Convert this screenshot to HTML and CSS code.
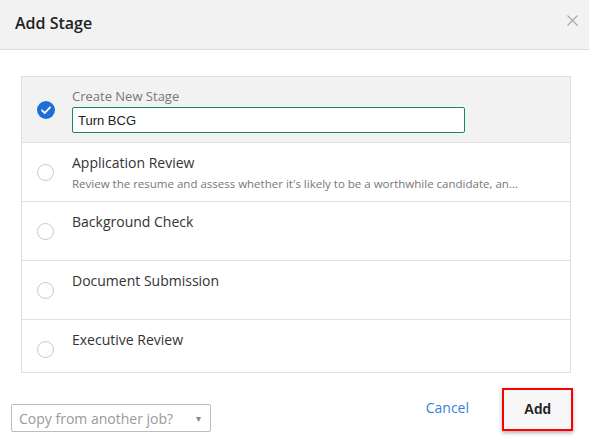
FILE: index.html
```html
<!DOCTYPE html>
<html lang="en">
  <head>
    <meta charset="UTF-8" />
    <meta name="viewport" content="width=device-width, initial-scale=1.0" />
    <title>Add Stage</title>
    <link rel="stylesheet" href="styles.css">
  </head>
  <body>
    <div class="modal">
      <div class="modal__header">
        <h1 class="modal__title">Add Stage</h1>
        <button class="modal__close" aria-label="Close">
          <svg width="11" height="11" viewBox="0 0 11 11">
            <path d="M0.5 0.5 L10.5 10.5 M10.5 0.5 L0.5 10.5" stroke="#a6a6a6" stroke-width="1.1" fill="none" />
          </svg>
        </button>
      </div>

      <div class="modal__body">
        <ul class="stage-list">
          <li class="stage stage--selected">
            <span class="stage__pick">
              <svg class="check" width="18" height="18" viewBox="0 0 18 18">
                <circle cx="9" cy="9" r="9" fill="#1f6fd6" />
                <path d="M5 9.3 L7.8 12 L13 6.4" stroke="#fff" stroke-width="1.8" fill="none" stroke-linecap="round" stroke-linejoin="round" />
              </svg>
            </span>
            <div class="stage__info">
              <label class="stage__label" for="stageName">Create New Stage</label>
              <input class="stage__input" id="stageName" type="text" value="Turn BCG" />
            </div>
          </li>
          <li class="stage">
            <span class="stage__pick"><span class="radio"></span></span>
            <div class="stage__info">
              <div class="stage__name">Application Review</div>
              <div class="stage__desc">Review the resume and assess whether it's likely to be a worthwhile candidate, and decide whether to move them forward.</div>
            </div>
          </li>
          <li class="stage">
            <span class="stage__pick"><span class="radio"></span></span>
            <div class="stage__info">
              <div class="stage__name">Background Check</div>
            </div>
          </li>
          <li class="stage">
            <span class="stage__pick"><span class="radio"></span></span>
            <div class="stage__info">
              <div class="stage__name">Document Submission</div>
            </div>
          </li>
          <li class="stage">
            <span class="stage__pick"><span class="radio"></span></span>
            <div class="stage__info">
              <div class="stage__name">Executive Review</div>
            </div>
          </li>
        </ul>
      </div>

      <div class="modal__footer">
        <div class="copy-select">
          <span class="copy-select__text">Copy from another job?</span>
          <span class="copy-select__arrow">&#9662;</span>
        </div>
        <div class="modal__actions">
          <a href="#" class="link-button">Cancel</a>
          <button class="add-button">Add</button>
        </div>
      </div>
    </div>
  </body>
</html>
```

FILE: styles.css
```css
body {
  margin: 0;
  font-family: "Open Sans", Arial, sans-serif;
  color: #333;
  background: #fff;
}

.modal {
  width: 589px;
  height: 445px;
  overflow: hidden;
}

.modal__header {
  height: 50px;
  box-sizing: border-box;
  display: flex;
  align-items: center;
  justify-content: space-between;
  padding: 0 11px 0 15px;
  background: #f2f2f2;
  border-bottom: 1px solid #dcdcdc;
}

.modal__title {
  margin: 0 0 3px;
  font-size: 16px;
  font-weight: 600;
  color: #222;
}

.modal__close {
  border: none;
  background: none;
  padding: 0;
  margin-bottom: 9px;
  display: flex;
  cursor: pointer;
}

.modal__body {
  padding: 26px 18px 0 21px;
}

.stage-list {
  list-style: none;
  margin: 0;
  padding: 0;
  height: 295px;
  overflow: hidden;
  border: 1px solid #e0e0e0;
}

.stage {
  display: flex;
  min-height: 58px;
  border-bottom: 1px solid #e0e0e0;
}

.stage--selected {
  min-height: 65px;
  background: #f2f2f2;
}

.stage__pick {
  width: 50px;
  flex-shrink: 0;
  display: flex;
  align-items: center;
  padding-left: 15px;
  box-sizing: border-box;
}

.radio {
  width: 17px;
  height: 17px;
  box-sizing: border-box;
  border: 1.5px solid #c8c8c8;
  border-radius: 50%;
  background: #fff;
}

.stage__info {
  flex: 1;
  min-width: 0;
  padding: 10px 52px 0 0;
}

.stage__label {
  display: block;
  font-size: 13px;
  line-height: 18px;
  color: #777;
}

.stage__input {
  display: block;
  width: 393px;
  height: 26px;
  margin-top: 2px;
  box-sizing: border-box;
  padding: 0 5px;
  border: 1px solid #178a5c;
  border-radius: 2px;
  font-family: "Liberation Sans", Arial, sans-serif;
  font-size: 13px;
  color: #222;
  outline: none;
}

.stage__name {
  font-size: 14px;
  line-height: 20px;
  color: #333;
}

.stage__desc {
  font-size: 11.5px;
  line-height: 21px;
  color: #777;
  white-space: nowrap;
  overflow: hidden;
  text-overflow: ellipsis;
}

.modal__footer {
  display: flex;
  justify-content: space-between;
  align-items: flex-end;
  padding: 15px 16px 0 11px;
}

.copy-select {
  width: 200px;
  height: 28px;
  box-sizing: border-box;
  display: flex;
  align-items: center;
  justify-content: space-between;
  padding: 0 9px 0 7px;
  border: 1px solid #bdbdbd;
  border-radius: 2px;
  font-size: 14px;
  color: #9a9a9a;
}

.copy-select__arrow {
  font-size: 10px;
  color: #888;
}

.modal__actions {
  display: flex;
  align-items: center;
  gap: 33px;
  margin-bottom: 1px;
}

.link-button {
  font-size: 14px;
  color: #3a7fdc;
  text-decoration: none;
  margin-bottom: 4px;
}

.add-button {
  width: 71px;
  height: 43px;
  box-sizing: border-box;
  border: 2px solid #f00;
  background: #f7f7f7;
  box-shadow: 0 2px 4px rgba(0, 0, 0, 0.3);
  font-family: "Liberation Sans", Arial, sans-serif;
  font-size: 14px;
  font-weight: bold;
  color: #222;
  padding: 0 0 2px;
  cursor: pointer;
}
```
